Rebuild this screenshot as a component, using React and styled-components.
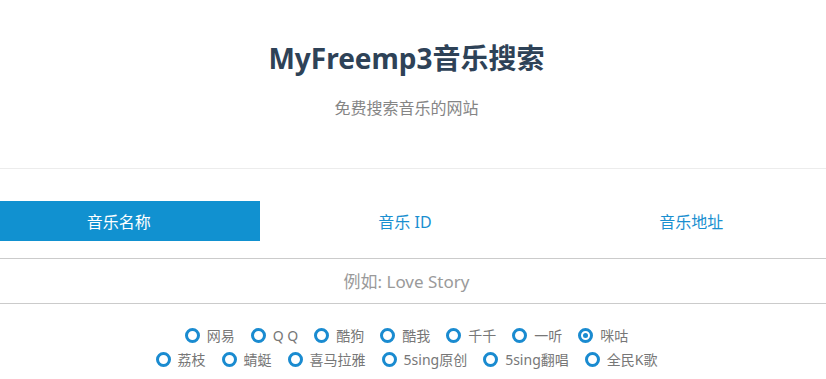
import React, { useState } from 'react';
import styled, { createGlobalStyle } from 'styled-components';

const GlobalStyle = createGlobalStyle`
  html, body {
    margin: 0;
    padding: 0;
    background: #fff;
    overflow-x: hidden;
  }
  body {
    font-family: "Noto Sans", "Noto Sans CJK SC", sans-serif;
  }
`;

const Page = styled.div`
  width: 859px;
  margin-left: -23px;
`;

const Header = styled.header`
  display: flex;
  flex-direction: column;
  align-items: center;
  padding: 38px 0 0;
  height: 169px;
  border-bottom: 1px solid #ececec;
  box-sizing: border-box;
  margin-bottom: 32px;
`;

const Title = styled.h1`
  margin: 0;
  font-size: 28px;
  line-height: 40px;
  font-weight: 700;
  color: #2e4257;
`;

const Subtitle = styled.p`
  margin: 20px 0 0;
  font-size: 16px;
  line-height: 20px;
  color: #858585;
`;

const Tabs = styled.ul`
  display: flex;
  list-style: none;
  margin: 0 0 17px;
  padding: 0;
`;

const Tab = styled.li`
  flex: 1;
  display: flex;
`;

const TabLink = styled.a`
  flex: 1;
  height: 40px;
  margin-right: 3px;
  display: flex;
  align-items: center;
  justify-content: center;
  font-size: 16px;
  cursor: pointer;
  color: ${(p) => (p.$active ? '#fff' : '#1a8fd0')};
  background: ${(p) => (p.$active ? '#1191d0' : 'transparent')};
`;

const SearchInput = styled.input`
  display: block;
  width: 100%;
  height: 46px;
  box-sizing: border-box;
  border: 1px solid #cbcbcb;
  outline: none;
  text-align: center;
  font-family: inherit;
  font-size: 17px;
  color: #555;
  &::placeholder {
    color: #9a9a9a;
  }
`;

const Options = styled.div`
  display: flex;
  flex-direction: column;
  align-items: center;
  padding-top: 19px;
`;

const OptionRow = styled.div`
  display: flex;
  gap: 16px;
  height: 24px;
  align-items: center;
`;

const OptionLabel = styled.label`
  display: flex;
  align-items: center;
  gap: 7px;
  font-size: 14px;
  color: #777;
  cursor: pointer;
`;

const Radio = styled.input`
  appearance: none;
  flex-shrink: 0;
  margin: 0;
  width: 15px;
  height: 15px;
  border: 3px solid #1a8bd0;
  border-radius: 50%;
  box-sizing: border-box;
  display: grid;
  place-items: center;
  cursor: pointer;
  &:checked::after {
    content: '';
    width: 5px;
    height: 5px;
    border-radius: 50%;
    background: #1a8bd0;
  }
`;

const tabs = ['音乐名称', '音乐 ID', '音乐地址'];

const rows = [
  [
    { id: 'netease', name: '网易' },
    { id: 'qq', name: 'Q Q' },
    { id: 'kugou', name: '酷狗' },
    { id: 'kuwo', name: '酷我' },
    { id: 'qianqian', name: '千千' },
    { id: '1ting', name: '一听' },
    { id: 'migu', name: '咪咕' },
  ],
  [
    { id: 'lizhi', name: '荔枝' },
    { id: 'qingting', name: '蜻蜓' },
    { id: 'ximalaya', name: '喜马拉雅' },
    { id: '5singyc', name: '5sing原创' },
    { id: '5singfc', name: '5sing翻唱' },
    { id: 'kg', name: '全民K歌' },
  ],
];

export default function App() {
  const [tab, setTab] = useState(0);
  const [source, setSource] = useState('migu');

  return (
    <Page>
      <GlobalStyle />
      <Header>
        <Title>MyFreemp3音乐搜索</Title>
        <Subtitle>免费搜索音乐的网站</Subtitle>
      </Header>

      <Tabs>
        {tabs.map((t, i) => (
          <Tab key={t}>
            <TabLink $active={tab === i} onClick={() => setTab(i)}>
              {t}
            </TabLink>
          </Tab>
        ))}
      </Tabs>

      <SearchInput placeholder="例如: Love Story" />

      <Options>
        {rows.map((row, i) => (
          <OptionRow key={i}>
            {row.map((o) => (
              <OptionLabel key={o.id}>
                <Radio
                  type="radio"
                  name="source"
                  checked={source === o.id}
                  onChange={() => setSource(o.id)}
                />
                {o.name}
              </OptionLabel>
            ))}
          </OptionRow>
        ))}
      </Options>
    </Page>
  );
}
